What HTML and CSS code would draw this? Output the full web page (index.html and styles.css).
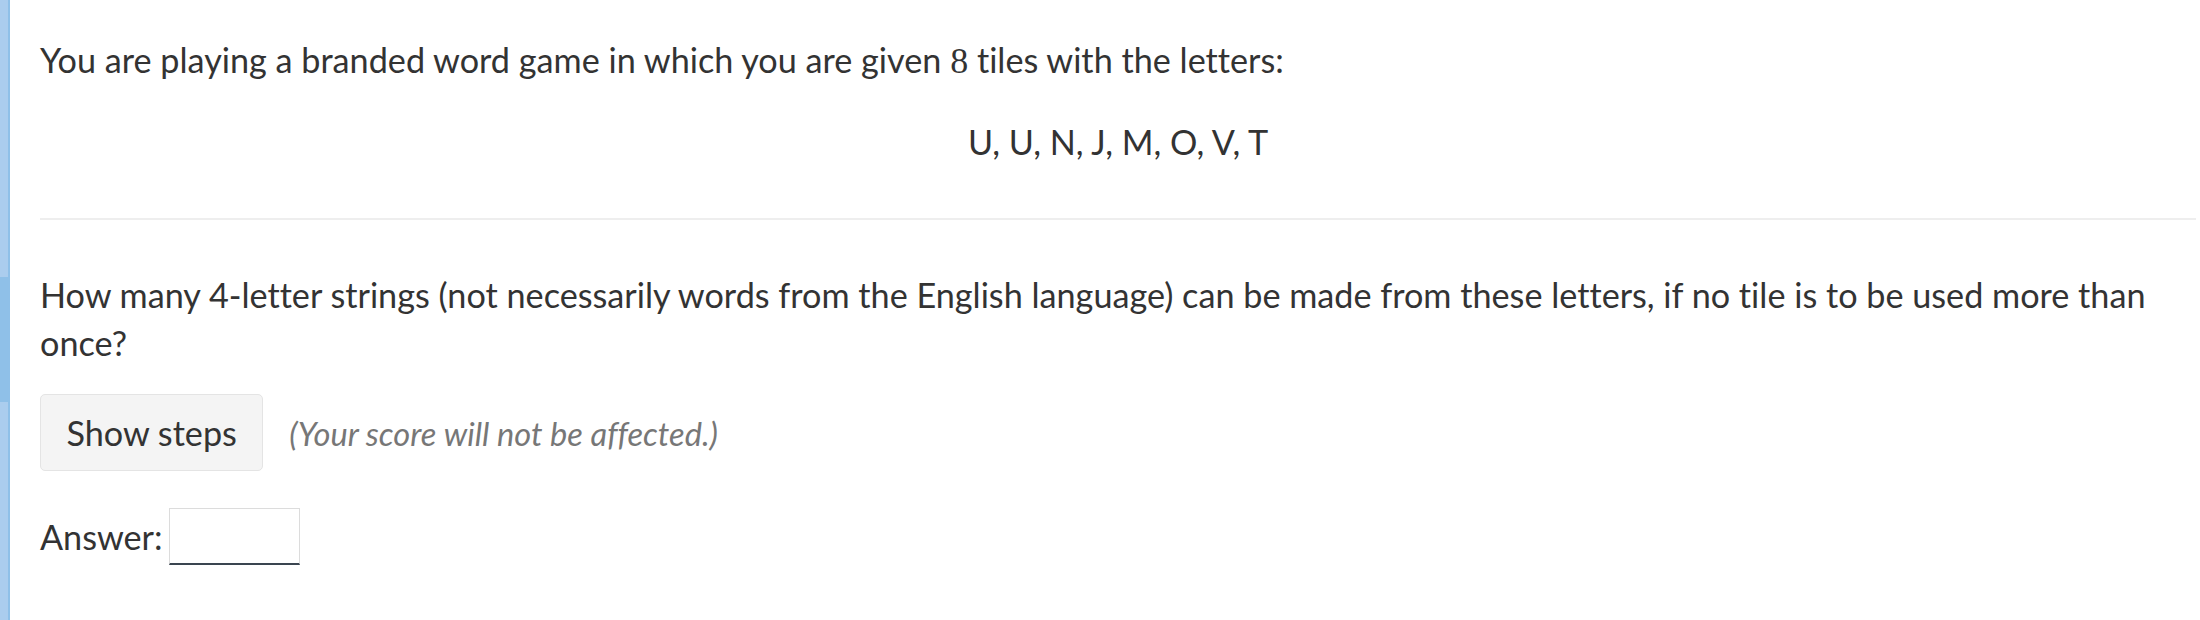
FILE: index.html
```html
<!DOCTYPE html>
<html lang="en">
<head>
<meta charset="utf-8">
<title>Word game question</title>
<link rel="stylesheet" href="styles.css">
</head>
<body>
<div class="page">
  <div class="side-bar"><div class="side-bar-mark"></div></div>
  <main class="content">
    <p class="intro">You are playing a branded word game in which you are given <span class="math">8</span> tiles with the letters:</p>
    <p class="letters">U, U, N, J, M, O, V, T</p>
    <hr class="rule">
    <p class="question">How many 4-letter strings (not necessarily words from the English language) can be made from these letters, if no tile is to be used more than once?</p>
    <div class="steps-row">
      <button class="steps-btn" type="button">Show steps</button>
      <span class="steps-note">(Your score will not be affected.)</span>
    </div>
    <div class="answer-row">
      <label class="answer-label" for="answer">Answer:</label>
      <input class="answer-input" id="answer" type="text">
    </div>
  </main>
</div>
</body>
</html>
```
FILE: styles.css
```css
html, body {
  margin: 0;
  padding: 0;
  background: #fff;
}

body {
  font-family: "Lato", "Noto Sans", sans-serif;
  font-size: 34.2px;
  line-height: 48px;
  color: #333;
  font-variant-ligatures: none;
}

.page {
  display: flex;
  min-height: 620px;
}

.side-bar {
  width: 8px;
  flex: none;
  background: #abcdee;
  border-right: 2px solid #8fc0e8;
}

.side-bar-mark {
  margin-top: 277px;
  height: 125px;
  width: 10px;
  background: #8fc0e8;
}

.content {
  flex: 1;
  padding: 36px 4px 0 30px;
}

.content p {
  margin: 0;
}

.math {
  font-family: "Liberation Serif", "DejaVu Serif", serif;
  font-size: 36px;
}

.letters {
  margin-top: 33px !important;
  text-align: center;
}

.rule {
  margin: 52px 0 0 0;
  border: 0;
  height: 2px;
  background: #eee;
}

.question {
  margin-top: 51px !important;
}

.steps-row {
  display: flex;
  align-items: baseline;
  gap: 26px;
  margin-top: 27px;
}

.steps-btn {
  font: inherit;
  color: #333;
  background: #f4f4f4;
  border: 1px solid #e4e4e4;
  border-radius: 5px;
  padding: 13.5px 25.5px;
  margin: 0;
}

.steps-note {
  font-style: italic;
  font-size: 32.6px;
  color: #777;
}

.answer-row {
  display: flex;
  align-items: center;
  gap: 6px;
  margin-top: 37px;
}

.answer-input {
  box-sizing: border-box;
  width: 131px;
  height: 57px;
  margin: 0;
  border: 1px solid #dcdcdc;
  border-bottom: 2px solid #3a4550;
  background: #fff;
  font: inherit;
  padding: 0 6px;
}
```
